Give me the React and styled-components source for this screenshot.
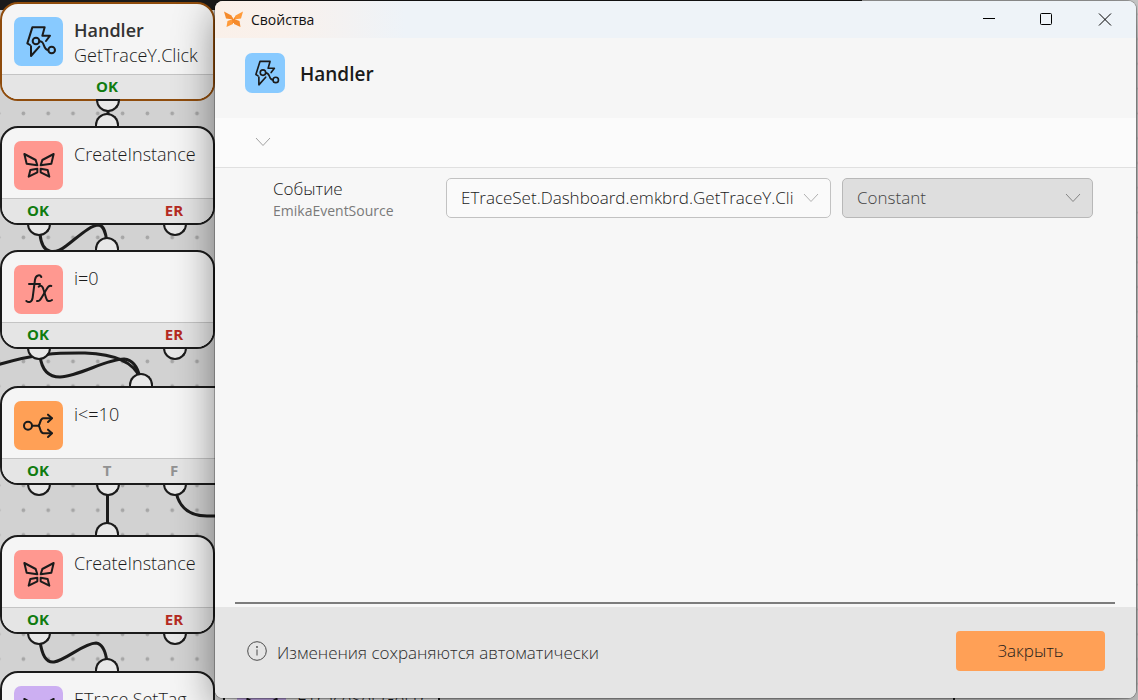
import styled, { createGlobalStyle } from "styled-components";
import { useState } from "react";

const nodes = [
  {
    id: "handler",
    x: 0,
    y: 2,
    icon: "handler",
    color: "#88caff",
    title: "Handler",
    subtitle: "GetTraceY.Click",
    active: true,
    outputs: [{ label: "OK", x: 107, tone: "ok" }],
  },
  {
    id: "create1",
    x: 0,
    y: 126,
    icon: "butterfly",
    color: "#ff9890",
    subtitle: "CreateInstance",
    input: 107,
    outputs: [
      { label: "OK", x: 38, tone: "ok" },
      { label: "ER", x: 174, tone: "error" },
    ],
  },
  {
    id: "assign",
    x: 0,
    y: 250,
    icon: "fx",
    color: "#ff9890",
    subtitle: "i=0",
    input: 107,
    outputs: [
      { label: "OK", x: 38, tone: "ok" },
      { label: "ER", x: 174, tone: "error" },
    ],
  },
  {
    id: "condition",
    x: 0,
    y: 386,
    width: 280,
    icon: "branch",
    color: "#ffa056",
    subtitle: "i<=10",
    input: 141,
    outputs: [
      { label: "OK", x: 38, tone: "ok" },
      { label: "T", x: 107, tone: "muted" },
      { label: "F", x: 174, tone: "muted" },
    ],
  },
  {
    id: "create2",
    x: 0,
    y: 535,
    icon: "butterfly",
    color: "#ff9890",
    subtitle: "CreateInstance",
    input: 107,
    outputs: [
      { label: "OK", x: 38, tone: "ok" },
      { label: "ER", x: 174, tone: "error" },
    ],
  },
  {
    id: "setTag",
    x: 0,
    y: 671,
    icon: "butterfly",
    color: "#ccaff2",
    subtitle: "ETrace.SetTag",
    input: 107,
    outputs: [{ label: "OK", x: 38, tone: "ok" }],
  },
  {
    id: "getTrace",
    x: 223,
    y: 671,
    width: 217,
    icon: "butterfly",
    color: "#ccaff2",
    subtitle: "ETraceSet.GetTr",
    outputs: [{ label: "OK", x: 38, tone: "ok" }],
  },
];

const edges = [
  "M108 108V118",
  "M40 234C42 256 56 254 66 246C78 237 90 225 99 225C105 226 106 236 107 242",
  "M40 356C42 372 50 377 60 377C80 376 106 359 124 359C134 360 138 368 140 378",
  "M-3 365C40 352 62 353 85 353C112 354 133 360 140 378",
  "M107.500 492V526",
  "M176 492C179 506 187 516 207 516H222",
  "M40 641C42 656 46 663 54 662C66 660 84 643 96 643C104 644 106 654 107 662",
];

function NodeIcon({ name }) {
  return (
    <IconSvg viewBox="0 0 147 147" aria-hidden="true">
      {name === "handler" && (
        <>
          <path d="M48 84L40 79L55 31H92L85 56H108L96 72" />
          <path d="M51 88V117L76 89" />
          <circle cx="66" cy="72" r="10" />
          <path d="M76 73C86 73 87 78 90 86C93 95 95 99 103 99" />
          <circle cx="113" cy="99" r="10" />
        </>
      )}
      {name === "butterfly" && (
        <>
          <path d="M31 39L65 57L70 73L38 68Z" />
          <path d="M119 39L85 57L80 73L112 68Z" />
          <path d="M49 87L70 83V94L44 107Z" />
          <path d="M101 87L80 83V94L106 107Z" />
        </>
      )}
      {name === "fx" && (
        <>
          <path d="M82 36C79 29 66 28 63 44L56 98C54 112 44 114 37 108" />
          <path d="M45 57H78" />
          <path d="M74 65C82 59 86 64 89 75L96 98C99 109 105 111 114 105" />
          <path d="M112 63C104 60 101 67 95 77L84 96C79 105 75 110 69 108" />
        </>
      )}
      {name === "branch" && (
        <>
          <circle cx="42" cy="74" r="12" />
          <path d="M54 74H74C80 66 78 52 88 52H113" />
          <path d="M74 74C80 82 78 97 88 97H113" />
          <path d="M102 41L114 52L102 63" />
          <path d="M102 86L114 97L102 108" />
        </>
      )}
    </IconSvg>
  );
}

function Chevron() {
  return (
    <svg width="16" height="10" viewBox="0 0 16 10" aria-hidden="true">
      <path d="M1 1L8 8.500L15 1" fill="none" stroke="currentColor" />
    </svg>
  );
}

function FlowNode({ node }) {
  return (
    <NodeBox $x={node.x} $y={node.y} $width={node.width} $active={node.active}>
      {node.input && <InputPort $x={node.input} />}
      <NodeBody>
        <NodeTile $color={node.color}>
          <NodeIcon name={node.icon} />
        </NodeTile>
        <NodeText>
          {node.title && <NodeTitle>{node.title}</NodeTitle>}
          <span>{node.subtitle}</span>
        </NodeText>
      </NodeBody>
      <NodeFooter>
        {node.outputs.map((output) => (
          <OutputLabel key={output.label} $x={output.x} $tone={output.tone}>
            {output.label}
          </OutputLabel>
        ))}
      </NodeFooter>
      {node.outputs.map((output) => (
        <OutputPort key={output.label} $x={output.x + 1} />
      ))}
    </NodeBox>
  );
}

function FlowCanvas() {
  return (
    <Canvas>
      <CanvasDrawing>
        <defs>
          <pattern
            id="grid"
            x="11"
            y="101"
            width="24.8"
            height="24.8"
            patternUnits="userSpaceOnUse"
          >
            <circle cx="12.4" cy="12.4" r="1.900" fill="#a6a6a6" />
          </pattern>
        </defs>
        <rect width="100%" height="100%" fill="url(#grid)" />
        <rect width="862" height="10" fill="#1b1b1b" />
        <path d="M954 672V720" stroke="#1b1b1b" strokeWidth="2" />
        {edges.map((d) => (
          <path
            key={d}
            d={d}
            fill="none"
            stroke="#1b1b1b"
            strokeWidth="3"
            strokeLinecap="round"
          />
        ))}
      </CanvasDrawing>
      {nodes.map((node) => (
        <FlowNode key={node.id} node={node} />
      ))}
    </Canvas>
  );
}

export default function App() {
  const [source, setSource] = useState("click");

  return (
    <Desktop>
      <GlobalStyle />
      <FlowCanvas />
      <Dialog role="dialog" aria-labelledby="dialog-title">
        <TitleBar>
          <svg width="19" height="17" viewBox="0 0 19 17" aria-hidden="true">
            <path d="M0 0.500L7.500 4.500L9 8.500L2 7.500Z" fill="#f58a2c" />
            <path d="M19 0.500L11.500 4.500L10 8.500L17 7.500Z" fill="#ff9a3a" />
            <path d="M9 8L3.500 10L2.500 16L9 13Z" fill="#ff9a3a" />
            <path d="M10 8L15.500 10L16.500 16L10 13Z" fill="#f58a2c" />
            <path d="M7.500 5L9.500 8L11.500 5L10.500 12H8.500Z" fill="#f58a2c" />
          </svg>
          <WindowTitle id="dialog-title">Свойства</WindowTitle>
          <WindowButton aria-label="Свернуть">
            <svg width="14" height="14" viewBox="0 0 14 14">
              <path d="M1 5.500H13" />
            </svg>
          </WindowButton>
          <WindowButton aria-label="Развернуть">
            <svg width="14" height="14" viewBox="0 0 14 14">
              <rect x="0.500" y="0.500" width="11" height="11" rx="1" />
            </svg>
          </WindowButton>
          <WindowButton aria-label="Закрыть окно">
            <svg width="14" height="14" viewBox="0 0 14 14">
              <path d="M1 0.500L13 12.500M13 0.500L1 12.500" />
            </svg>
          </WindowButton>
        </TitleBar>
        <Header>
          <HeaderTile>
            <NodeIcon name="handler" />
          </HeaderTile>
          <HeaderTitle>Handler</HeaderTitle>
        </Header>
        <Section>
          <CollapseButton aria-label="Группа свойств">
            <Chevron />
          </CollapseButton>
        </Section>
        <Properties>
          <PropertyRow>
            <PropertyLabel htmlFor="event-source">
              Событие
              <PropertyHint>EmikaEventSource</PropertyHint>
            </PropertyLabel>
            <SelectBox>
              <Select
                id="event-source"
                value={source}
                onChange={(e) => setSource(e.target.value)}
              >
                <option value="click">
                  ETraceSet.Dashboard.emkbrd.GetTraceY.Click
                </option>
              </Select>
              <Chevron />
            </SelectBox>
            <SelectBox $disabled>
              <Select aria-label="Constant" disabled>
                <option>Constant</option>
              </Select>
              <Chevron />
            </SelectBox>
          </PropertyRow>
        </Properties>
        <Footer>
          <svg width="20" height="20" viewBox="0 0 20 20" aria-hidden="true">
            <circle cx="10" cy="10" r="9.300" fill="none" stroke="#4a4a4a" />
            <path d="M10 8.500V14.500" stroke="#4a4a4a" />
            <circle cx="10" cy="6" r="0.900" fill="#4a4a4a" />
          </svg>
          <FooterText>Изменения сохраняются автоматически</FooterText>
          <CloseButton>Закрыть</CloseButton>
        </Footer>
      </Dialog>
    </Desktop>
  );
}

const GlobalStyle = createGlobalStyle`
  * {
    box-sizing: border-box;
  }

  body {
    margin: 0;
    font-family: "Open Sans", "Noto Sans", sans-serif;
    font-weight: 300;
    color: #1b1b1b;
  }

  button,
  select {
    font: inherit;
  }
`;

const Desktop = styled.div`
  position: relative;
  height: 100vh;
  overflow: hidden;
`;

const Canvas = styled.div`
  position: absolute;
  inset: 0;
  overflow: hidden;
  background: #d2d2d2;
`;

const CanvasDrawing = styled.svg`
  position: absolute;
  inset: 0;
  width: 100%;
  height: 100%;
`;

const NodeBox = styled.div`
  position: absolute;
  left: ${({ $x }) => $x}px;
  top: ${({ $y }) => $y}px;
  width: ${({ $width }) => $width || 215}px;
  border: 2px solid ${({ $active }) => ($active ? "#8f4c0c" : "#1b1b1b")};
  border-radius: 18px;
  background: #f5f5f5;
`;

const NodeBody = styled.div`
  display: flex;
  gap: 11px;
  height: 70px;
  padding: 13px 12px 0;
`;

const NodeTile = styled.div`
  flex-shrink: 0;
  width: 49px;
  height: 49px;
  border-radius: 7px;
  background: ${({ $color }) => $color};
`;

const IconSvg = styled.svg`
  display: block;
  width: 100%;
  height: 100%;
  fill: none;
  stroke: #1b1b1b;
  stroke-width: 6;
  stroke-linecap: round;
  stroke-linejoin: round;
`;

const NodeText = styled.div`
  display: flex;
  flex-direction: column;
  padding-top: 1px;
  font-size: 18px;
  line-height: 25px;
  white-space: nowrap;
`;

const NodeTitle = styled.strong`
  font-weight: 600;
  color: #333;
`;

const NodeFooter = styled.div`
  position: relative;
  height: 25px;
  border-top: 1px solid #c4c4c4;
  border-radius: 0 0 16px 16px;
  background: #e5e5e5;
`;

const tones = { ok: "#107c10", error: "#b52a22", muted: "#929292" };

const OutputLabel = styled.span`
  position: absolute;
  left: ${({ $x }) => $x - 2}px;
  transform: translateX(-50%);
  font-size: 15px;
  line-height: 22px;
  font-weight: 700;
  color: ${({ $tone }) => tones[$tone]};
`;

const Port = styled.span`
  position: absolute;
  left: ${({ $x }) => $x - 14}px;
  width: 24px;
  height: 13px;
  border: 2px solid #1b1b1b;
  background: #e8e8e8;
`;

const InputPort = styled(Port)`
  top: -15px;
  border-bottom: 0;
  border-radius: 12px 12px 0 0;
`;

const OutputPort = styled(Port)`
  bottom: -13px;
  border-radius: 0 0 12px 12px;
`;

const Dialog = styled.div`
  position: absolute;
  inset: 1px 2px 2px 215px;
  display: flex;
  flex-direction: column;
  overflow: hidden;
  border-radius: 8px;
  background: #f7f7f7;
  box-shadow:
    0 0 0 1px rgba(0, 0, 0, 0.25),
    0 10px 40px rgba(0, 0, 0, 0.45);
`;

const TitleBar = styled.div`
  display: flex;
  align-items: center;
  height: 37px;
  padding: 0 2px 0 9px;
  background: linear-gradient(90deg, #faf0e9 0, #f9f1ec 70px, #eef3f8 190px);
`;

const WindowTitle = styled.span`
  flex: 1;
  margin-left: 8px;
  font-size: 14px;
  font-weight: 400;
  color: #111;
`;

const WindowButton = styled.button`
  display: flex;
  align-items: center;
  justify-content: center;
  width: 58px;
  height: 36px;
  padding: 0;
  border: 0;
  background: none;

  > svg {
    fill: none;
    stroke: #000;
  }
`;

const Header = styled.div`
  display: flex;
  align-items: center;
  gap: 15px;
  height: 80px;
  padding: 0 30px 10px;
  background: #f6f6f6;
`;

const HeaderTile = styled.div`
  width: 40px;
  height: 40px;
  border-radius: 7px;
  background: #88caff;
`;

const HeaderTitle = styled.h1`
  margin: 0;
  padding-top: 2px;
  font-size: 19px;
  line-height: 24px;
  font-weight: 600;
  color: #1b1b1b;
`;

const Section = styled.div`
  display: flex;
  align-items: center;
  height: 50px;
  padding: 0 40px 2px;
  border-bottom: 1px solid #e0e0e0;
  background: #fbfbfb;
`;

const CollapseButton = styled.button`
  display: flex;
  padding: 0;
  border: 0;
  background: none;
  color: #a0a0a0;
`;

const Properties = styled.div`
  flex: 1;
  margin: 0 21px 0 20px;
  border-bottom: 2px solid #7c7c7c;
`;

const PropertyRow = styled.div`
  display: grid;
  grid-template-columns: 162px minmax(0, 385fr) minmax(0, 251fr);
  gap: 11px;
  align-items: start;
  padding: 10px 22px 0 38px;
`;

const PropertyLabel = styled.label`
  display: flex;
  flex-direction: column;
  font-size: 17px;
  line-height: 22px;
`;

const PropertyHint = styled.span`
  font-size: 14px;
  font-weight: 400;
  color: #7a7a7a;
`;

const SelectBox = styled.div`
  position: relative;
  color: ${({ $disabled }) => ($disabled ? "#848484" : "#b0b0b0")};

  > svg {
    position: absolute;
    right: 12px;
    top: 15px;
    pointer-events: none;
  }
`;

const Select = styled.select`
  width: 100%;
  height: 40px;
  padding: 0 36px 2px 14px;
  appearance: none;
  border: 1px solid #c2c2c2;
  border-radius: 5px;
  background: #fafafa;
  color: #1b1b1b;
  font-size: 17px;

  &:disabled {
    background: #dedede;
    border-color: #b8b8b8;
    color: #444;
    opacity: 1;
  }
`;

const Footer = styled.div`
  display: flex;
  align-items: center;
  gap: 10px;
  height: 91px;
  margin-top: 3px;
  padding: 0 31px 3px 32px;
  background: #e5e5e5;
`;

const FooterText = styled.span`
  flex: 1;
  padding-top: 2px;
  font-size: 17px;
  color: #2b2b2b;
`;

const CloseButton = styled.button`
  width: 149px;
  height: 40px;
  padding: 0 0 2px;
  border: 0;
  border-radius: 4px;
  background: #ffa056;
  color: #1b1b1b;
  font-size: 17px;
`;
